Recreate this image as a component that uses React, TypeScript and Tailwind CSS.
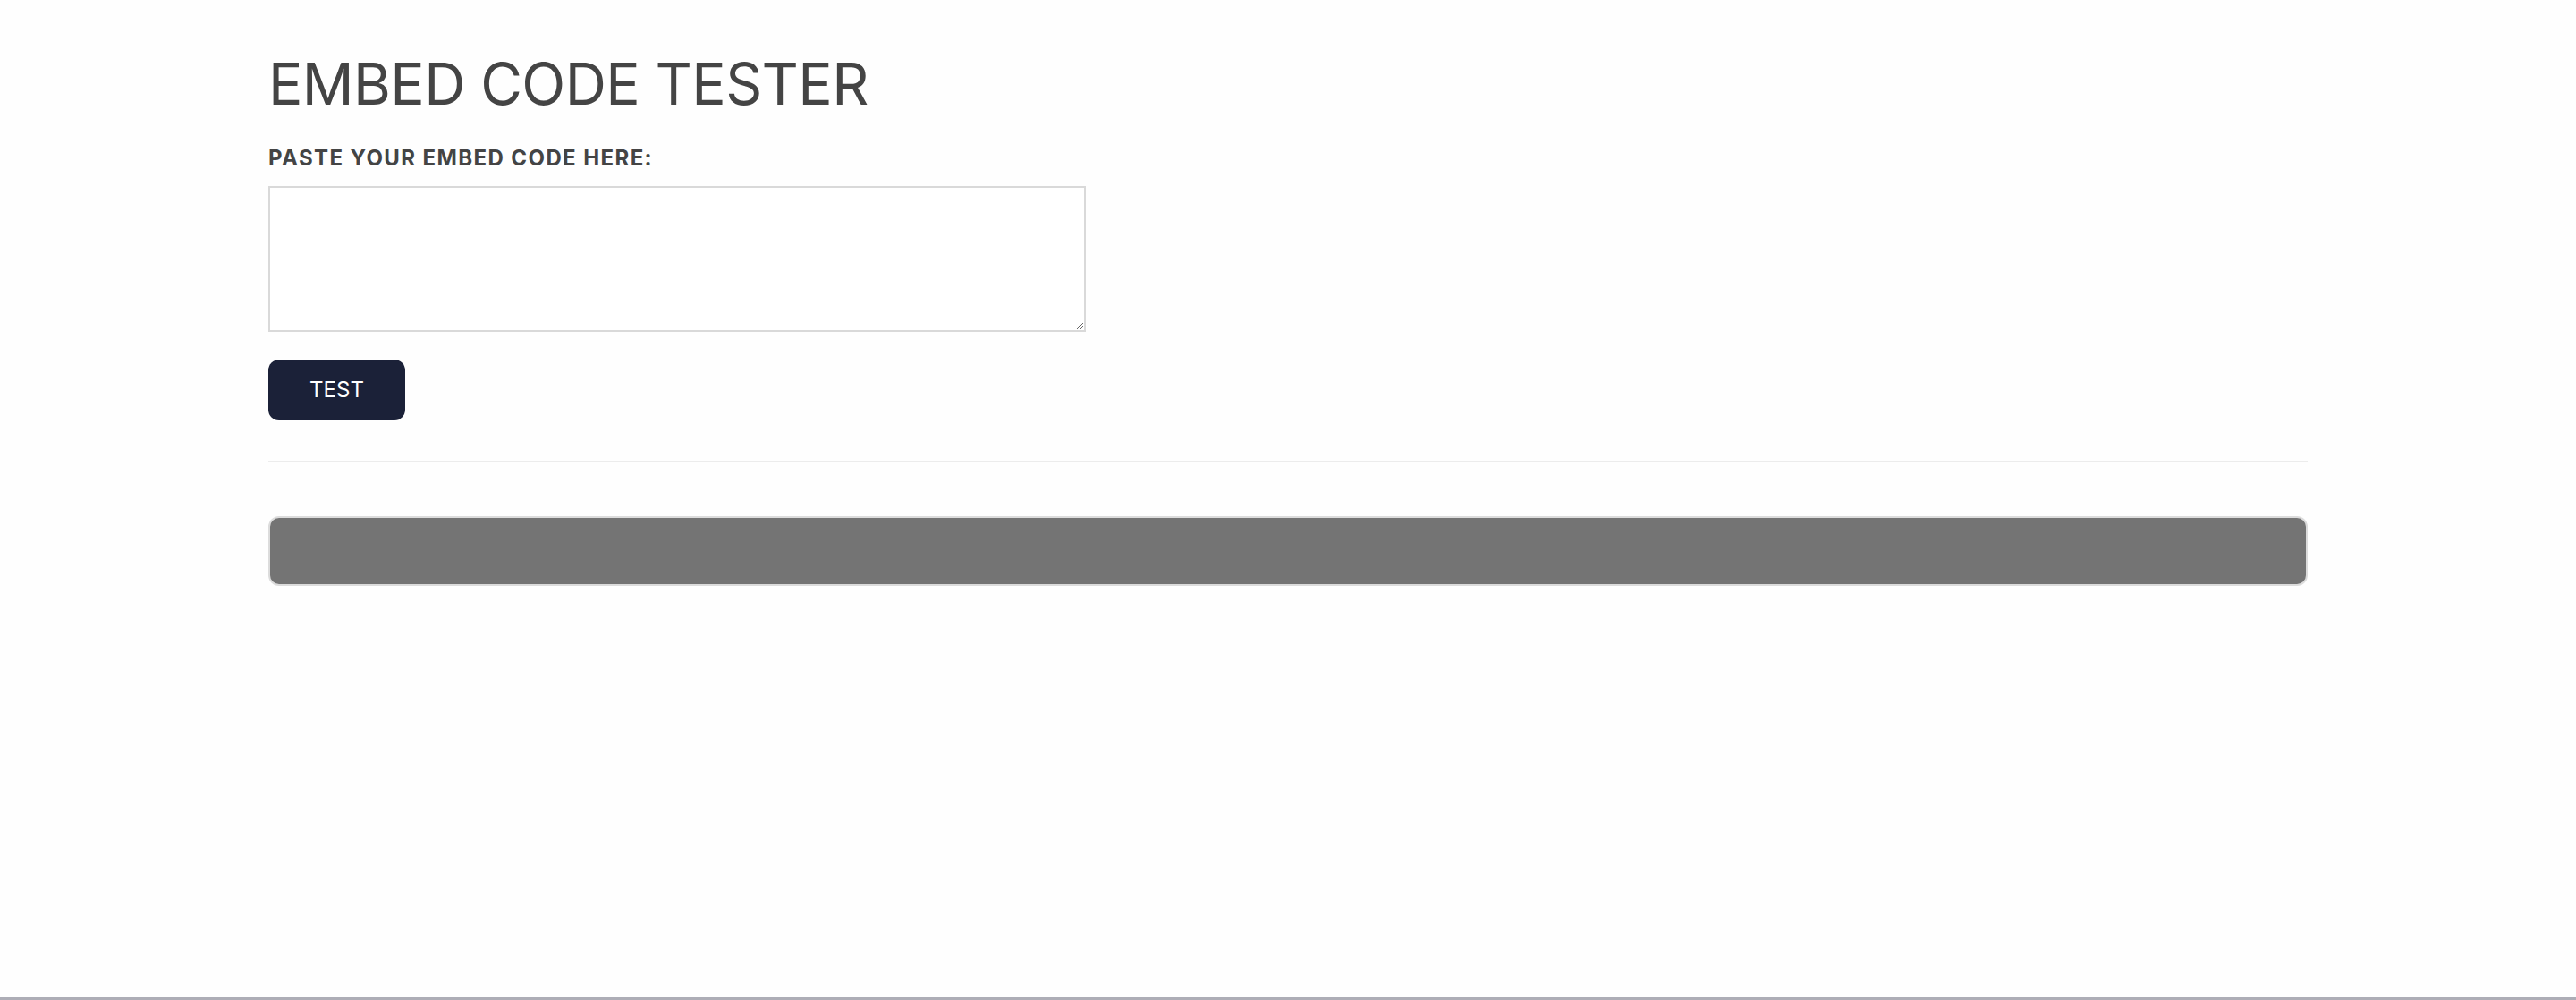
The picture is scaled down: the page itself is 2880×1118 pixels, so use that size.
import { useState } from "react";

export default function App() {
    const [code, setCode] = useState("");

    return (
        <div className="flex min-h-screen flex-col bg-[#fefefe] font-['Inter','Noto_Sans',sans-serif] text-[#444444]">
            <div className="mx-auto w-[2280px] flex-1">
                {/* Heading */}
                <h1 className="mt-[55px] text-[64px] leading-[77px] font-normal tracking-[-0.6px]">
                    EMBED CODE TESTER
                </h1>

                {/* Form */}
                <label
                    htmlFor="embed"
                    className="mt-[30px] block text-[24px] leading-[29px] font-bold tracking-[1.4px]"
                >
                    PASTE YOUR EMBED CODE HERE:
                </label>
                <textarea
                    id="embed"
                    value={code}
                    onChange={(e) => setCode(e.target.value)}
                    className="mt-[17px] block h-[163px] w-[914px] border-2 border-[#d9d9d9] bg-white p-3 text-[20px] outline-none"
                />
                <button className="mt-[31px] flex h-[68px] w-[153px] items-center justify-center rounded-[12px] bg-[#1b2138] text-[24px] leading-none font-normal text-white">
                    TEST
                </button>

                <hr className="mt-[45px] h-[2px] border-0 bg-[#ececec]" />

                {/* Preview area */}
                <div className="mt-[60px] h-[78px] rounded-[12px] border-2 border-[#dcdcdc] bg-[#747474]" />
            </div>

            <div className="h-[3px] bg-[#adadb6]" />
        </div>
    );
}
